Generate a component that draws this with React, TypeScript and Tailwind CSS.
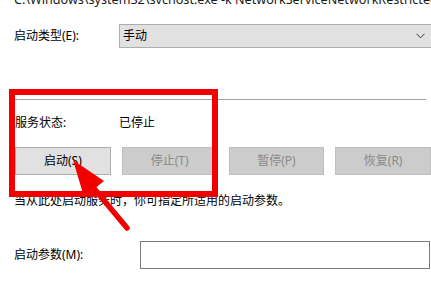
import React from 'react';

const font = { fontFamily: '"Noto Sans", "Noto Sans CJK SC", sans-serif' };

export default function App() {
  const buttons = [
    { label: '启动(S)', enabled: true },
    { label: '停止(T)', enabled: false },
    { label: '暂停(P)', enabled: false },
    { label: '恢复(R)', enabled: false },
  ];

  return (
    <div className="relative w-[431px] h-[299px] overflow-hidden bg-white text-[12px] text-black" style={font}>
      <div className="pl-[14px] mt-[-8px] h-[16px] leading-[16px] text-[12.6px] whitespace-nowrap text-[#1a1a1a]">
        C:\Windows\system32\svchost.exe -k NetworkServiceNetworkRestricted
      </div>

      {/* startup type */}
      <div className="flex items-center mt-[16px] h-[24px]">
        <div className="w-[119px] pl-[14px]">启动类型(E):</div>
        <div className="flex-1 h-[24px] mr-[-6px] flex items-center justify-between bg-[#e1e1e1] border border-[#adadad] pl-[3px] pr-[11px]">
          <span>手动</span>
          <svg width="9" height="6" viewBox="0 0 9 6">
            <path d="M0.5 0.8 L4.5 4.8 L8.5 0.8" fill="none" stroke="#333" strokeWidth="1" />
          </svg>
        </div>
      </div>

      <div className="ml-[14px] mr-[5px] mt-[51px] h-px bg-[#a0a0a0]" />

      {/* status */}
      <div className="flex items-center mt-[15px] h-[16px]">
        <div className="w-[119px] pl-[15px]">服务状态:</div>
        <div>已停止</div>
      </div>

      <div className="flex gap-[11px] pl-[15px] mt-[16px]">
        {buttons.map((b) => (
          <div
            key={b.label}
            className={
              b.enabled
                ? 'w-[96px] h-[28px] flex items-center justify-center bg-[#e1e1e1] border border-[#adadad] text-black'
                : 'w-[96px] h-[28px] flex items-center justify-center bg-[#cccccc] border border-[#bfbfbf] text-[#8a8a8a]'
            }
          >
            {b.label}
          </div>
        ))}
      </div>

      <div className="pl-[14px] mt-[18px] h-[16px] leading-[16px]">当从此处启动服务时，你可指定所适用的启动参数。</div>

      {/* params */}
      <div className="flex items-center mt-[32px]">
        <div className="w-[140px] pl-[14px]">启动参数(M):</div>
        <div className="w-[290px] h-[28px] border border-[#7a7a7a] bg-white" />
      </div>

      {/* annotation overlay */}
      <div className="absolute left-[9px] top-[89px] w-[209px] h-[108px] border-[6px] border-[#f20000]" />
      <svg className="absolute left-0 top-0" width="431" height="299" viewBox="0 0 431 299">
        <polygon points="73,160 104,181 84,197" fill="#f20000" />
        <line x1="92" y1="186" x2="127" y2="228" stroke="#f20000" strokeWidth="5.5" strokeLinecap="round" />
      </svg>
    </div>
  );
}
